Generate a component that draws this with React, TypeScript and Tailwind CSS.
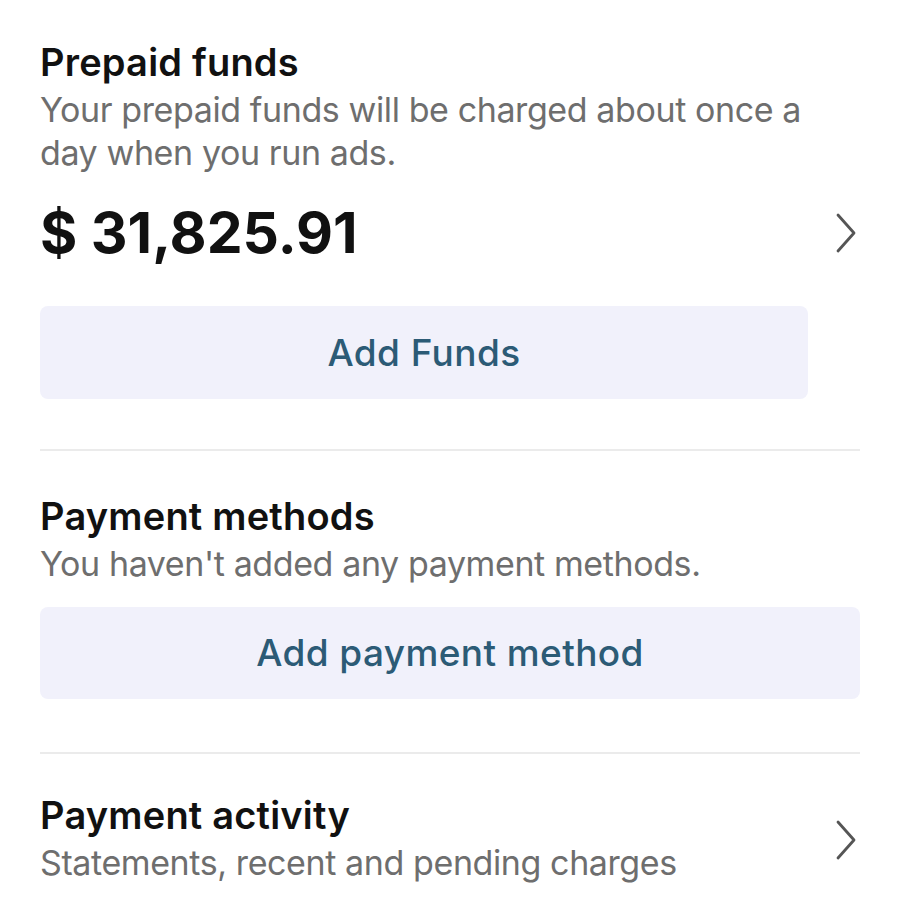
import React from "react";

const Chevron = () => (
  <svg width="24" height="42" viewBox="0 0 24 42" fill="none" className="shrink-0">
    <path d="M4 3 L20 21 L4 39" stroke="#555" strokeWidth="2.8" strokeLinecap="round" strokeLinejoin="round" />
  </svg>
);

export default function App() {
  return (
    <div
      className="w-[900px] h-[900px] bg-white overflow-hidden pl-[40px] pr-[40px]"
      style={{ fontFamily: "Inter, 'Noto Sans', sans-serif" }}
    >
      {/* Prepaid funds */}
      <div className="pt-[42px]">
        <div className="text-[38px] leading-[40px] font-semibold text-[#111] tracking-[0.2px]">Prepaid funds</div>
        <div className="mt-[6px] text-[34px] leading-[43px] text-[#6e6e6e] tracking-[-0.4px] w-[790px]">
          Your prepaid funds will be charged about once a day when you run ads.
        </div>
        <div className="mt-[28px] flex items-center justify-between pr-[2px]">
          <div className="text-[57px] leading-[62px] font-bold text-[#111]">$ 31,825.91</div>
          <Chevron />
        </div>
        <div className="mt-[42px] w-[768px] h-[93px] rounded-[8px] bg-[#f1f1fb] flex items-center justify-center">
          <span className="text-[37px] font-medium text-[#2c5b76] tracking-[0.4px]">Add Funds</span>
        </div>
      </div>

      <div className="mt-[50px] h-[2px] bg-[#ebebeb]" />

      {/* Payment methods */}
      <div className="pt-[45px]">
        <div className="text-[38px] leading-[40px] font-semibold text-[#111] tracking-[0.2px]">Payment methods</div>
        <div className="mt-[6px] text-[34px] leading-[43px] text-[#6e6e6e] tracking-[-0.4px]">
          You haven't added any payment methods.
        </div>
        <div className="mt-[22px] h-[92px] rounded-[8px] bg-[#f1f1fb] flex items-center justify-center">
          <span className="text-[37px] font-medium text-[#2c5b76] tracking-[0.4px]">Add payment method</span>
        </div>
      </div>

      <div className="mt-[53px] h-[2px] bg-[#ebebeb]" />

      {/* Payment activity */}
      <div className="pt-[41px] flex items-center justify-between pr-[2px]">
        <div>
          <div className="text-[38px] leading-[40px] font-semibold text-[#111] tracking-[0.2px]">Payment activity</div>
          <div className="mt-[6px] text-[34px] leading-[43px] text-[#6e6e6e] tracking-[-0.4px]">
            Statements, recent and pending charges
          </div>
        </div>
        <Chevron />
      </div>
    </div>
  );
}
